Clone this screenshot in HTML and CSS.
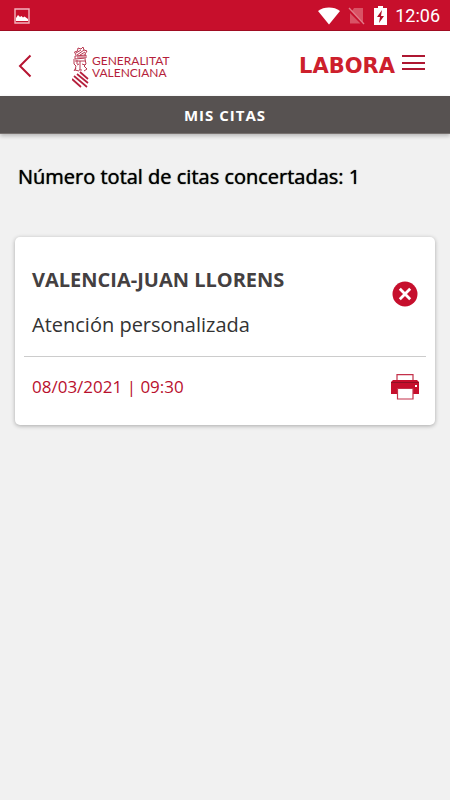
FILE: index.html
```html
<!DOCTYPE html>
<html lang="es">
<head>
<meta charset="utf-8">
<meta name="viewport" content="width=device-width, initial-scale=1">
<title>Mis citas</title>
<link rel="stylesheet" href="styles.css">
</head>
<body>
<div class="status">
  <svg width="16" height="16" viewBox="0 0 16 16" aria-hidden="true"><path d="M1 1h14v14H1z" fill="none" stroke="#f3b4bd" stroke-width="1.4"/><path d="M2 13V10l2-3 2 2 1.500-1 1.500 1.500 1.500-1L14 11v2z" fill="#fff"/></svg>
  <div class="status-right">
    <svg width="22" height="18" viewBox="0 0 22 18" aria-hidden="true"><path d="M0 4C6-.6 16-.6 22 4L11 17.500z" fill="#fff"/></svg>
    <svg width="18" height="18" viewBox="0 0 18 18" aria-hidden="true"><path d="M6 1h9v14.500L4 4zM2 6l10.500 10.500H2z" fill="#d95365"/><path d="M1 1l15 16" stroke="#e27d8b" stroke-width="1.300"/></svg>
    <svg width="13" height="19" viewBox="0 0 13 19" aria-hidden="true"><path d="M4 0h5v2h4v17H0V2h4z" fill="#fff"/><path d="M8 4L3 11h3l-1 6 5-7H7z" fill="#b20d26"/></svg>
    <time class="clock">12:06</time>
  </div>
</div>
<header class="header">
  <button class="icon-button back" aria-label="Volver"><svg width="14" height="24" viewBox="0 0 14 24"><path d="M12.500 1.500L2 12l10.500 10.500" fill="none" stroke="#b61431" stroke-width="2"/></svg></button>
  <div class="generalitat">
    <svg width="18" height="42" viewBox="0 0 18 42" aria-hidden="true">
      <g fill="none" stroke="#b83850" stroke-width="1">
        <path d="M4 9L2.500 6l3-1L6 2l3 1 2-2 1 3 3 1-2 3v2M4 7l5-3M5 9l7-5M8 9l5-3M3 10l11-1v3L3 13zM5 11h8"/>
        <path d="M2 13v5l2 2-1 4 4 1M5 14v4M3 15h10M13 13l1 5-2 2 3 3-3 2M8 15v9M5 19l2-1M10 18l3 1M7 24h3M4 22l-2 3"/>
      </g>
      <path d="M8 26l8 7M5 28l11 9M2 30l13 11M0 33l9 8" fill="none" stroke="#b51f3c" stroke-width="1.700"/>
    </svg>
    <span class="generalitat-name">GENERALITAT<br>VALENCIANA</span>
  </div>
  <span class="labora">LABORA</span>
  <button class="icon-button menu" aria-label="Menú"><svg width="23" height="16" viewBox="0 0 23 16"><path d="M0 1h23M0 8h23M0 14h23" stroke="#ae1731" stroke-width="2"/></svg></button>
</header>
<h1 class="title">MIS CITAS</h1>
<main class="main">
  <h2 class="total">Número total de citas concertadas: 1</h2>
  <article class="card">
    <div class="row place">
      <div>
        <h3 class="office">VALENCIA-JUAN LLORENS</h3>
        <p class="service">Atención personalizada</p>
      </div>
      <button class="icon-button cancel" aria-label="Anular cita"><svg width="26" height="26" viewBox="0 0 26 26"><circle cx="13" cy="13" r="12.500" fill="#c60f2d"/><path d="M7.800 7.800l10.400 10.400M18.200 7.800L7.800 18.200" stroke="#fff" stroke-width="2.800"/></svg></button>
    </div>
    <div class="row when">
      <time class="date">08/03/2021 | 09:30</time>
      <button class="icon-button" aria-label="Imprimir"><svg width="28" height="26" viewBox="0 0 28 26"><path d="M6 7V.700h16V7" fill="#fff" stroke="#c4314a" stroke-width="1.200"/><path d="M2 6h24l2 2v12H0V8z" fill="#c60f2d"/><path d="M0 8.500h28" stroke="#8f1024"/><path d="M6.500 14.500h15.500v10.500H6.500z" fill="#fff" stroke="#c4314a" stroke-width="1.200"/><path d="M24 11h2v2h-2z" fill="#fff"/></svg></button>
    </div>
  </article>
</main>
</body>
</html>
```
FILE: styles.css
```css
* {
  box-sizing: border-box;
}

body {
  margin: 0;
  min-height: 100vh;
  background: #f1f1f1;
  color: #333;
  font-family: "Open Sans", sans-serif;
}

h1, h2, h3, p {
  margin: 0;
}

svg {
  display: block;
}

.status {
  display: flex;
  align-items: center;
  justify-content: space-between;
  height: 31px;
  padding: 1px 10px 0 14px;
  background: #c70f2c;
  border-bottom: 1px solid #a00c22;
}

.status-right {
  display: flex;
  align-items: center;
  gap: 8px;
}

.clock {
  color: #fff;
  font: 400 18px/24px Roboto, sans-serif;
}

.icon-button {
  flex: none;
  padding: 0;
  border: 0;
  background: none;
}

.header {
  display: flex;
  align-items: center;
  height: 65px;
  padding: 0 25px 0 18px;
  background: #fff;
}

.back {
  padding-top: 5px;
}

.menu {
  padding-bottom: 2px;
}

.generalitat {
  display: flex;
  align-items: center;
  gap: 2px;
  margin: 6px auto 0 40px;
}

.generalitat-name {
  color: #b51f3c;
  font: 400 12px/12px Lato, sans-serif;
}

.labora {
  margin: 4px 7px 0 0;
  color: #cd202c;
  font: 700 21px/24px "DejaVu Sans", sans-serif;
}

.title {
  height: 38px;
  background: #575251;
  border-bottom: 1px solid #77716f;
  box-shadow: 0 2px 4px #0000003d;
  color: #fff;
  font-size: 15px;
  font-weight: 700;
  line-height: 38px;
  letter-spacing: 1px;
  text-align: center;
}

.main {
  padding: 28px 15px;
}

.total {
  padding-left: 3px;
  color: #000;
  font-size: 20px;
  font-weight: 400;
  line-height: 30px;
  text-shadow: 0 0 1px #000;
}

.card {
  margin-top: 45px;
  padding: 0 9px;
  border-radius: 5px;
  background: #fff;
  box-shadow: 0 1px 4px #0000004d;
}

.row {
  display: flex;
  align-items: center;
  justify-content: space-between;
  padding: 0 8px;
}

.place {
  height: 120px;
  padding-top: 12px;
  border-bottom: 1px solid #ccc;
}

.office {
  color: #444041;
  font-size: 20px;
  font-weight: 700;
  line-height: 28px;
}

.service {
  margin-top: 17px;
  font-size: 20px;
  line-height: 28px;
}

.cancel {
  margin-bottom: 18px;
}

.when {
  height: 68px;
  padding: 0 7px 8px 8px;
}

.date {
  color: #b90f2d;
  font-size: 17px;
  line-height: 24px;
}
```
